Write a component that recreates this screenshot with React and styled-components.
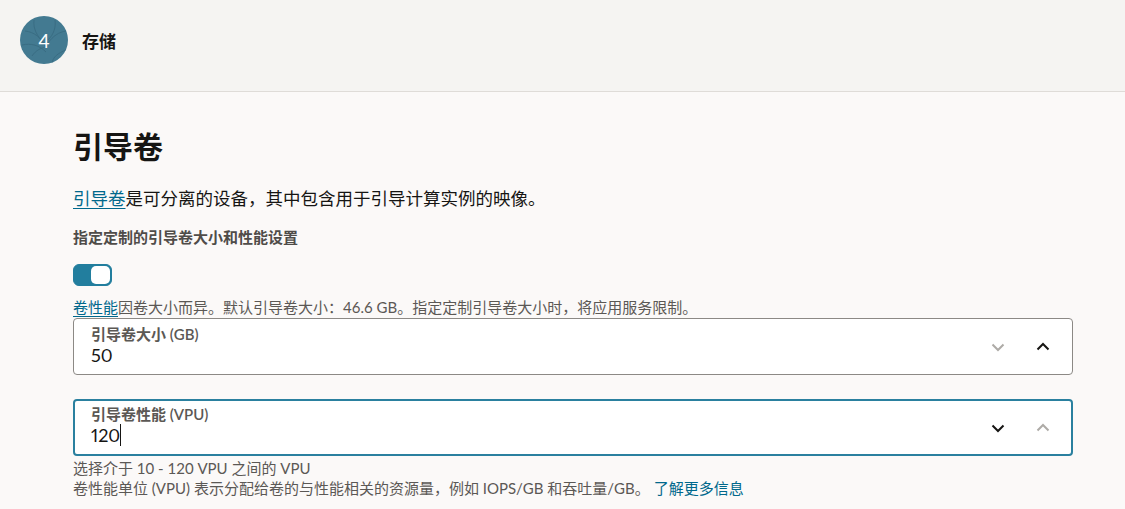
import React from 'react';
import styled, { createGlobalStyle } from 'styled-components';

const GlobalStyle = createGlobalStyle`
  html, body {
    margin: 0;
    padding: 0;
    background: #fbf9f8;
    overflow: hidden;
  }
  body {
    font-family: Lato, "Noto Sans CJK SC", sans-serif;
    color: #161513;
    text-spacing-trim: space-all;
  }
`;

const Page = styled.div`
  width: 1125px;
  height: 509px;
  overflow: hidden;
`;

const StepHeader = styled.header`
  height: 92px;
  box-sizing: border-box;
  padding: 16px 20px 0;
  display: flex;
  align-items: flex-start;
  gap: 14px;
  background: #f5f4f2;
  border-bottom: 1px solid #dfdcd8;
`;

const StepBadge = styled.div`
  width: 48px;
  height: 48px;
  border-radius: 50%;
  display: flex;
  align-items: center;
  justify-content: center;
  position: relative;
  overflow: hidden;
  background: #437a91;
  color: #ffffff;
  font-size: 19px;
`;

const BadgeTexture = styled.svg`
  position: absolute;
  inset: 0;
`;

const BadgeNumber = styled.span`
  position: relative;
`;

const StepTitle = styled.h3`
  margin: 0;
  line-height: 51px;
  font-size: 17px;
  font-weight: 700;
`;

const Section = styled.section`
  padding: 33px 52px 0 73px;
`;

const Heading = styled.h2`
  margin: 0;
  font-size: 30px;
  line-height: 42px;
  font-weight: 700;
`;

const Intro = styled.p`
  margin: 19px 0 0;
  font-size: 17.5px;
  line-height: 26px;
`;

const TextLink = styled.a`
  color: #00688c;
  text-decoration: underline;
  text-underline-offset: 3px;
`;

const PlainLink = styled.a`
  color: #00688c;
  margin-left: 4px;
`;

const SwitchLabel = styled.div`
  margin-top: 14px;
  font-size: 15px;
  line-height: 22px;
  font-weight: 700;
  color: #4f4c49;
`;

const Switch = styled.div`
  margin-top: 16px;
  width: 39px;
  height: 22px;
  box-sizing: border-box;
  border: 1px solid #227e9e;
  border-radius: 6px;
  background: #227e9e;
  padding: 1px;
  display: flex;
  justify-content: flex-end;
`;

const SwitchKnob = styled.span`
  width: 19px;
  height: 18px;
  border-radius: 5px;
  background: #ffffff;
`;

const Hint = styled.div`
  font-size: 15px;
  line-height: 20px;
  color: #5b5855;
`;

const SwitchHint = styled(Hint)`
  margin-top: 11px;
`;

const FieldStack = styled.div`
  margin-top: 1px;
  display: flex;
  flex-direction: column;
  gap: 24px;
`;

const Field = styled.div`
  height: 57px;
  box-sizing: border-box;
  display: flex;
  align-items: center;
  background: #ffffff;
  border-radius: 4px;
  padding: ${({ $focused }) => ($focused ? '0 20px 0 16px' : '0 21px 0 17px')};
  border: ${({ $focused }) => ($focused ? '2px solid #2a809f' : '1px solid #8c8985')};
`;

const FieldBody = styled.div`
  flex: 1;
  display: flex;
  flex-direction: column;
  padding-bottom: ${({ $focused }) => ($focused ? '6px' : '4px')};
`;

const FieldLabel = styled.label`
  font-size: 15px;
  line-height: 20px;
  font-weight: 600;
  color: #5b5855;
`;

const FieldValue = styled.div`
  font-size: 18px;
  line-height: 22px;
  color: #161513;
  font-variant-numeric: proportional-nums;
  display: flex;
  align-items: center;
`;

const Caret = styled.span`
  width: 1px;
  height: 22px;
  background: #161513;
`;

const Steppers = styled.div`
  display: flex;
  align-items: center;
  gap: 29px;
`;

const StepperIcon = styled.svg`
  width: 16px;
  height: 16px;
  fill: none;
  stroke: ${({ $muted }) => ($muted ? '#aeaba7' : '#161513')};
  stroke-width: 2;
`;

const Down = ({ muted }) => (
  <StepperIcon viewBox="0 0 16 16" $muted={muted}>
    <path d="M2.5 5.5l5.5 5.5 5.5-5.5" />
  </StepperIcon>
);

const Up = ({ muted }) => (
  <StepperIcon viewBox="0 0 16 16" $muted={muted}>
    <path d="M2.5 10.5l5.5-5.5 5.5 5.5" />
  </StepperIcon>
);

const HelpBlock = styled.div`
  margin-top: 2px;
`;

export default function App() {
  return (
    <Page>
      <GlobalStyle />
      <StepHeader>
        <StepBadge>
          <BadgeTexture viewBox="0 0 48 48" width="48" height="48" fill="none" stroke="#3a6d83" strokeWidth="1">
            <path d="M5 15c9 1 16 6 21 17M14 4c-1 9 3 16 10 23M46 15c-7 1-13 5-18 12M2 29c9-2 17 0 24 7M35 4c1 7-1 14-7 20M32 47c1-6 6-10 14-13M12 40c4-6 9-8 14-9" />
          </BadgeTexture>
          <BadgeNumber>4</BadgeNumber>
        </StepBadge>
        <StepTitle>存储</StepTitle>
      </StepHeader>
      <Section>
        <Heading>引导卷</Heading>
        <Intro>
          <TextLink>引导卷</TextLink>是可分离的设备，其中包含用于引导计算实例的映像。
        </Intro>
        <SwitchLabel>指定定制的引导卷大小和性能设置</SwitchLabel>
        <Switch>
          <SwitchKnob />
        </Switch>
        <SwitchHint>
          <TextLink>卷性能</TextLink>因卷大小而异。默认引导卷大小：46.6 GB。指定定制引导卷大小时，将应用服务限制。
        </SwitchHint>
        <FieldStack>
          <Field>
            <FieldBody>
              <FieldLabel>引导卷大小 (GB)</FieldLabel>
              <FieldValue>50</FieldValue>
            </FieldBody>
            <Steppers>
              <Down muted />
              <Up />
            </Steppers>
          </Field>
          <Field $focused>
            <FieldBody $focused>
              <FieldLabel>引导卷性能 (VPU)</FieldLabel>
              <FieldValue>120<Caret /></FieldValue>
            </FieldBody>
            <Steppers>
              <Down />
              <Up muted />
            </Steppers>
          </Field>
        </FieldStack>
        <HelpBlock>
          <Hint>选择介于 10 - 120 VPU 之间的 VPU</Hint>
          <Hint>
            卷性能单位 (VPU) 表示分配给卷的与性能相关的资源量，例如 IOPS/GB 和吞吐量/GB。
            <PlainLink>了解更多信息</PlainLink>
          </Hint>
        </HelpBlock>
      </Section>
    </Page>
  );
}
